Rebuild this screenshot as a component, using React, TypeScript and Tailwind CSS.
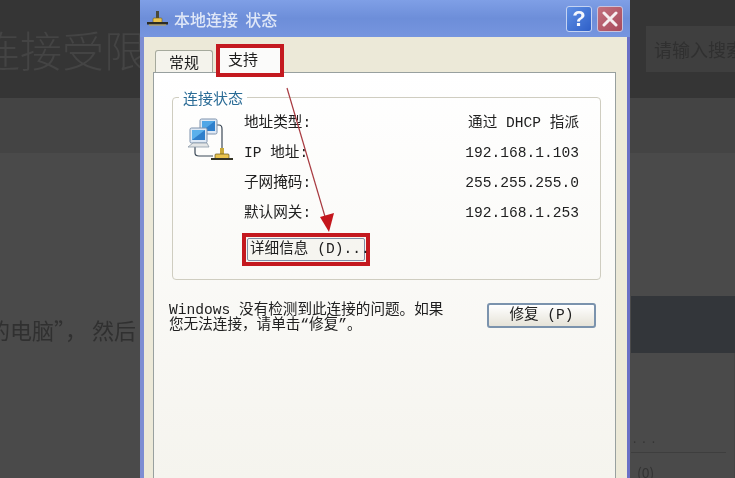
const cjk = "font-['Liberation_Mono','Noto_Sans_CJK_SC',monospace]";

const rows = [
  { label: '地址类型:', value: '通过 DHCP 指派' },
  { label: 'IP 地址:', value: '192.168.1.103' },
  { label: '子网掩码:', value: '255.255.255.0' },
  { label: '默认网关:', value: '192.168.1.253' },
];

function TitleIcon() {
  return (
    <svg width="22" height="18" viewBox="0 0 22 18" className="shrink-0">
      <rect x="9" y="1" width="3" height="9" fill="#4a4a3a" />
      <rect x="6" y="8" width="9" height="5" rx="1" fill="#e9c34e" stroke="#6b5a20" strokeWidth="0.6" />
      <rect x="0" y="12" width="21" height="2.5" fill="#2c2c24" />
      <rect x="2" y="14.5" width="17" height="1" fill="#c9a840" />
    </svg>
  );
}

function NetworkIcon() {
  return (
    <svg width="48" height="46" viewBox="0 0 48 46">
      <path d="M26 8 H32 Q35 8 35 12 V32" fill="none" stroke="#3c4a58" strokeWidth="1.2" />
      <path d="M8 30 V36 Q8 39 12 39 H26" fill="none" stroke="#3c4a58" strokeWidth="1.2" />
      <rect x="13" y="2" width="17" height="15" rx="1.5" fill="#dfe9f5" stroke="#7f93ad" />
      <rect x="15" y="4" width="13" height="10" fill="#4fa6e6" />
      <path d="M15 14 L28 4 V14 Z" fill="#2f7fcb" />
      <rect x="3" y="11" width="17" height="15" rx="1.5" fill="#dfe9f5" stroke="#7f93ad" />
      <rect x="5" y="13" width="13" height="10" fill="#5ab0ec" />
      <path d="M5 23 L18 13 V23 Z" fill="#2f7fcb" />
      <path d="M1 30 L6 26 H20 L22 30 Z" fill="#e4e6e6" stroke="#8c9aa8" strokeWidth="0.8" />
      <rect x="33" y="31" width="4" height="7" fill="#c8a93a" />
      <rect x="28" y="37" width="14" height="5" rx="1" fill="#e9c34e" stroke="#5e5220" strokeWidth="0.7" />
      <rect x="24" y="41" width="22" height="2" fill="#333326" />
    </svg>
  );
}

function RedArrow() {
  return (
    <svg width="60" height="160" viewBox="0 0 60 160" className="absolute left-[135px] top-[85px]">
      <line x1="8" y1="3" x2="47" y2="135" stroke="#a83a40" strokeWidth="1.2" />
      <polygon points="41,132 55,128 50,147" fill="#c4161c" />
    </svg>
  );
}

export default function App() {
  return (
    <div className="relative h-[478px] w-[735px] overflow-hidden bg-[#4a4a4a] blur-[0.5px] font-['Noto_Sans_CJK_SC',sans-serif]">
      {/* page behind the dialog */}
      <header className="flex h-[98px] items-center justify-between bg-[#353535]">
        <h1 className="-ml-[22px] whitespace-nowrap text-[42px] font-light leading-none text-[#444444]">连接受限的</h1>
        <div className="flex h-[46px] w-[89px] items-center overflow-hidden whitespace-nowrap bg-[#3f3f3f] pl-[8px] text-[18px] text-[#303030]">
          请输入搜索
        </div>
      </header>
      <div className="h-[55px] bg-[#444444]" />
      <div className="flex h-[325px]">
        <p className="-ml-[12px] mt-[165px] whitespace-nowrap text-[22px] leading-none text-[#303030]">的电脑”， 然后</p>
        <aside className="ml-auto mt-[143px] h-[182px] w-[104px] shrink-0">
          <div className="h-[57px] bg-[#33363a]" />
          <div className="h-[125px] border-r border-[#444444] pr-[8px]">
            <div className="flex h-[100px] items-end border-b border-[#3e3e3e] pb-[8px] pl-[2px] text-[12px] leading-none tracking-[6px] text-[#333333]">
              ...
            </div>
            <div className="pl-[6px] pt-[12px] text-[14px] leading-none text-[#333333]">(0)</div>
          </div>
        </aside>
      </div>

      {/* dialog screenshot */}
      <div className="absolute left-[140px] top-0 flex h-[478px] w-[490px] flex-col border-l-[4px] border-r-[3px] border-l-[#7d8dd2] border-r-[#6a70c6] bg-[#ece9d8]">
        <div className="-mx-[4px] -mr-[3px] flex h-[37px] shrink-0 items-center bg-gradient-to-b from-[#7f9fe6] via-[#6d8ed9] to-[#7695df] pl-[7px] pr-[7px]">
          <TitleIcon />
          <span className="ml-[5px] whitespace-pre text-[16px] font-medium text-[#dfe7f7]">本地连接  状态</span>
          <div className="ml-auto flex gap-[5px]">
            <div className="flex h-[26px] w-[26px] items-center justify-center rounded-[3px] border border-[#c5d3f2] bg-gradient-to-br from-[#5f8fe4] to-[#2e5fc8] font-['Liberation_Sans',sans-serif] text-[22px] font-bold leading-none text-[#f4f7fd]">
              ?
            </div>
            <div className="flex h-[26px] w-[26px] items-center justify-center rounded-[3px] border border-[#c9c3dc] bg-gradient-to-br from-[#c2717f] to-[#a84a5c]">
              <svg width="16" height="16" viewBox="0 0 16 16">
                <path d="M2 2 L14 14 M14 2 L2 14" stroke="#f6eef0" strokeWidth="3" strokeLinecap="round" />
              </svg>
            </div>
          </div>
        </div>

        {/* tabs */}
        <div className="flex h-[35px] shrink-0 items-end pl-[11px] text-[15px] text-[#1c1c1c]">
          <div className="flex h-[22px] w-[58px] items-center justify-center rounded-t-[3px] border border-b-0 border-[#a5a99c] bg-[#f4f3ec] leading-none">
            常规
          </div>
          <div className="relative z-10 -mb-[5px] ml-[3px] h-[33px] w-[68px] border-[4px] border-[#c4191f] bg-[#fbfbfa] pl-[8px] pt-[1px] leading-[20px]">
            支持
          </div>
        </div>

        {/* tab panel */}
        <div className="ml-[9px] flex min-h-0 flex-1 w-[463px] flex-col border border-b-0 border-[#98a09f] bg-gradient-to-b from-white to-[#f5f4ee] pl-[18px] pr-[14px] pt-[24px]">
          <fieldset className="relative h-[183px] rounded-[4px] border border-[#cfcdc0]">
            <legend className="ml-[6px] -mt-[9px] absolute bg-white px-[4px] text-[15px] leading-[18px] text-[#2b6c96]">连接状态</legend>
            <div className="flex pl-[14px] pt-[11px]">
              <div className="w-[57px] shrink-0 pt-[8px]">
                <NetworkIcon />
              </div>
              <div className="flex-1 pr-[21px]">
                {rows.map((row) => (
                  <div key={row.label} className={`flex h-[30px] items-center justify-between whitespace-pre text-[14.6px] text-[#202020] ${cjk}`}>
                    <span>{row.label}</span>
                    <span>{row.value}</span>
                  </div>
                ))}
                <div className="-ml-[2px] mt-[4px] flex h-[33px] w-[128px] items-center border-[4px] border-[#c4191f] bg-[#f6f5f0] p-[1px]">
                  <div className={`flex h-full w-full items-center whitespace-pre rounded-[2px] border border-[#7f8ea6] pl-[2px] text-[14.6px] leading-none text-[#202020] ${cjk}`}>
                    详细信息 (D)...
                  </div>
                </div>
              </div>
            </div>
          </fieldset>

          <div className="mt-[23px] flex items-start justify-between pr-[5px]">
            <p className={`-ml-[3px] w-[296px] pt-[-1px] text-[14.6px] leading-[15px] text-[#202020] ${cjk}`}>
              Windows 没有检测到此连接的问题。如果
              <br />
              您无法连接，请单击“修复”。
            </p>
            <div className={`flex h-[25px] w-[109px] items-center justify-center whitespace-pre rounded-[3px] border-[2px] border-[#7b93ad] bg-gradient-to-b from-white to-[#e6e3d8] text-[14.6px] leading-none text-[#202020] ${cjk}`}>
              修复 (P)
            </div>
          </div>
        </div>
        <RedArrow />
      </div>
    </div>
  );
}
